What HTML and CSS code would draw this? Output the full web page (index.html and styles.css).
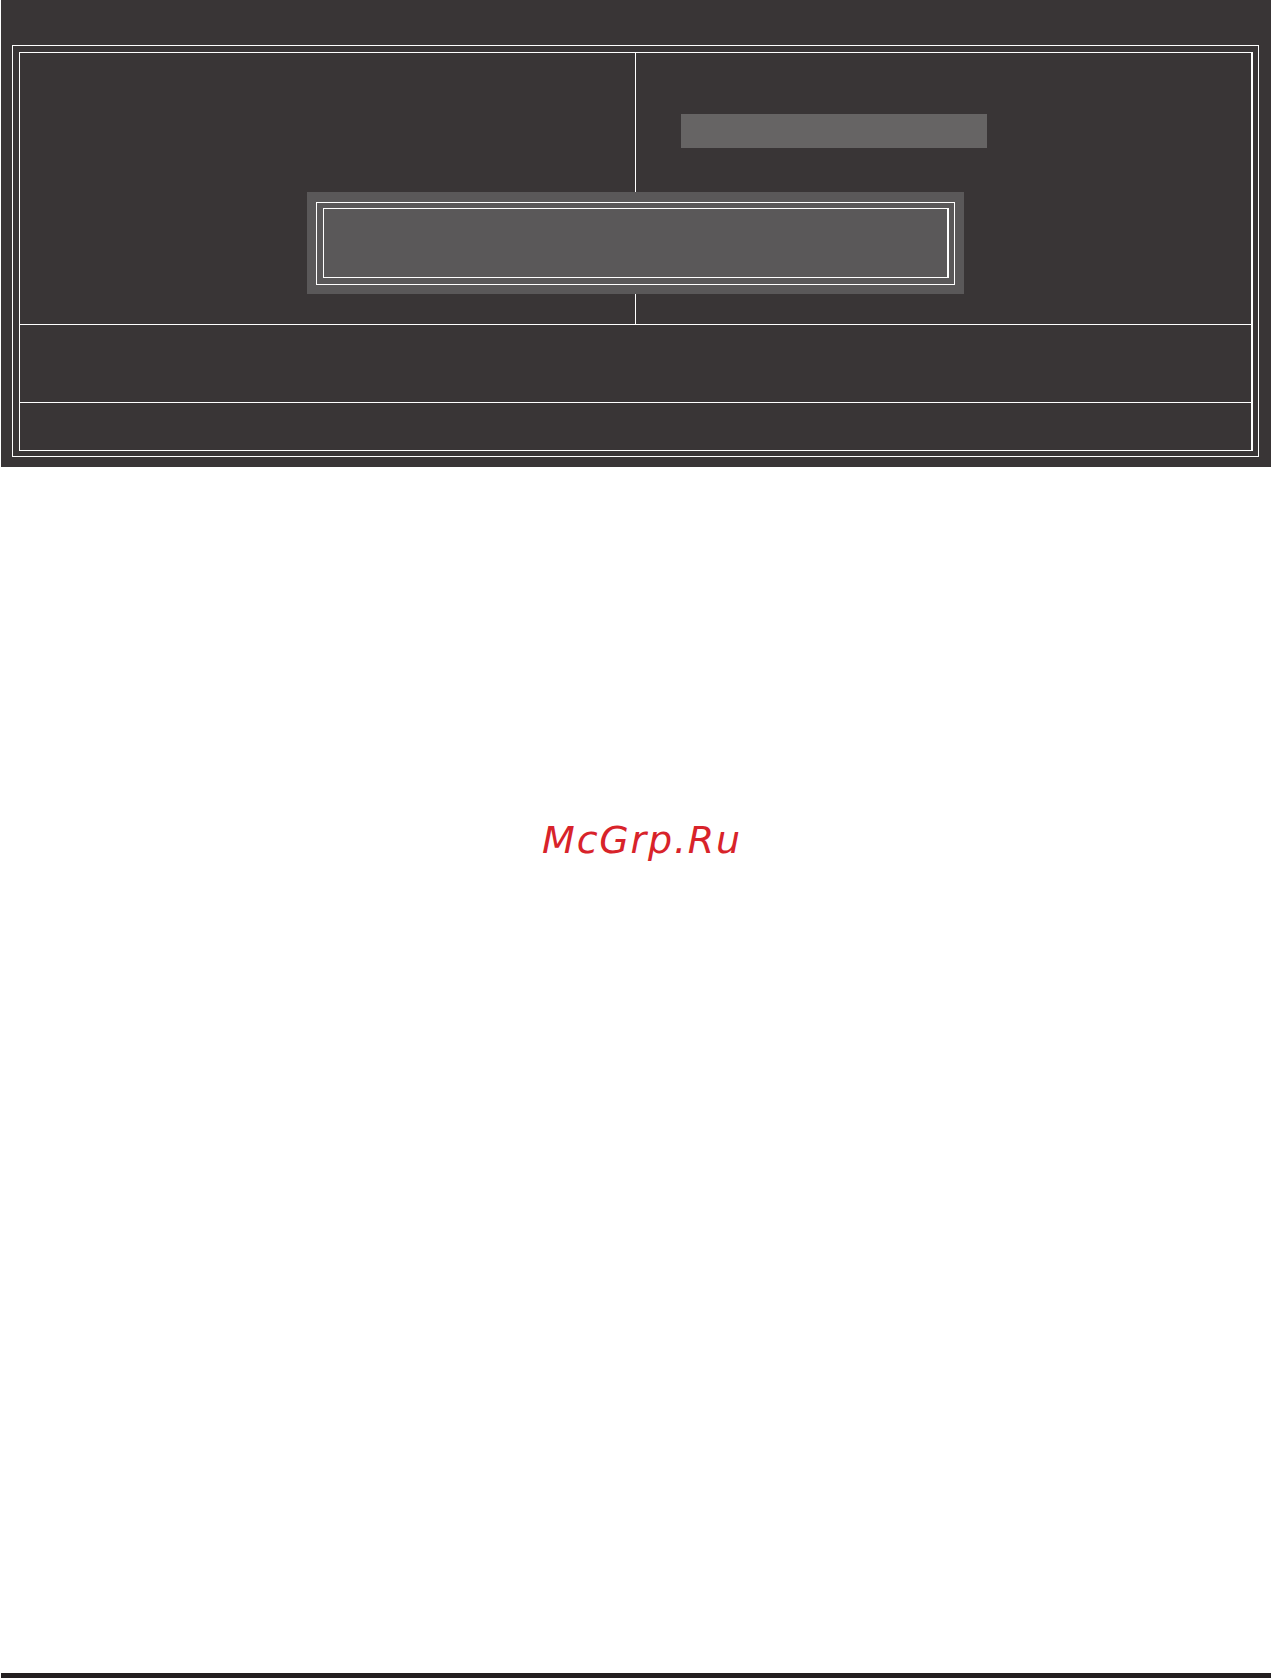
FILE: index.html
```html
<!DOCTYPE html>
<html>
<head>
<meta charset="utf-8">
<title>Setup</title>
<link rel="stylesheet" href="styles.css">
</head>
<body>
<div class="page">
  <div class="screen">
    <div class="frame-outer">
      <div class="frame-inner">
        <div class="row-top">
          <div class="col-left"></div>
          <div class="col-right">
            <div class="gray-bar"></div>
          </div>
        </div>
        <div class="row-mid"></div>
        <div class="row-bottom"></div>
      </div>
    </div>
    <div class="dialog">
      <div class="dialog-outer">
        <div class="dialog-inner"></div>
      </div>
    </div>
  </div>
  <div class="watermark">McGrp.Ru</div>
  <div class="bottom-bar"></div>
</div>
</body>
</html>
```
FILE: styles.css
```css
html, body {
  margin: 0;
  padding: 0;
  background: #ffffff;
}

.page {
  width: 1271px;
  height: 1678px;
  display: flex;
  flex-direction: column;
  overflow: hidden;
}

.screen {
  position: relative;
  margin-left: 1px;
  width: 1270px;
  height: 467px;
  box-sizing: border-box;
  background: #393536;
  padding: 45px 0 0 11px;
}

.frame-outer {
  width: 1247px;
  height: 412px;
  box-sizing: border-box;
  border: 1px solid #ffffff;
  padding: 6px 5px 5px 6px;
}

.frame-inner {
  width: 100%;
  height: 100%;
  box-sizing: border-box;
  border: 1px solid #ffffff;
  border-right-width: 2px;
  display: flex;
  flex-direction: column;
}

.row-top {
  height: 272px;
  box-sizing: border-box;
  border-bottom: 1px solid #ffffff;
  display: flex;
}

.col-left {
  width: 616px;
  box-sizing: border-box;
  border-right: 1px solid #ffffff;
}

.col-right {
  flex: 1;
  padding: 61px 0 0 45px;
}

.gray-bar {
  width: 306px;
  height: 34px;
  background: #666464;
}

.row-mid {
  height: 78px;
  box-sizing: border-box;
  border-bottom: 1px solid #ffffff;
}

.row-bottom {
  flex: 1;
}

.dialog {
  position: absolute;
  left: 306px;
  top: 192px;
  width: 657px;
  height: 102px;
  box-sizing: border-box;
  background: #5a5859;
  padding: 10px 9px 9px 9px;
}

.dialog-outer {
  width: 100%;
  height: 100%;
  box-sizing: border-box;
  border: 1px solid #ffffff;
  padding: 5px 5px 6px 6px;
}

.dialog-inner {
  width: 100%;
  height: 100%;
  box-sizing: border-box;
  border: 1px solid #ffffff;
  border-right-width: 2px;
}

.watermark {
  margin-top: 354px;
  text-align: center;
  font-family: "DejaVu Sans", sans-serif;
  font-style: oblique;
  font-size: 38px;
  line-height: 38px;
  letter-spacing: 1.8px;
  color: #d8232a;
  padding-left: 13px;
}

.bottom-bar {
  margin-top: auto;
  margin-left: 1px;
  height: 5px;
  background: #231f20;
}
```
